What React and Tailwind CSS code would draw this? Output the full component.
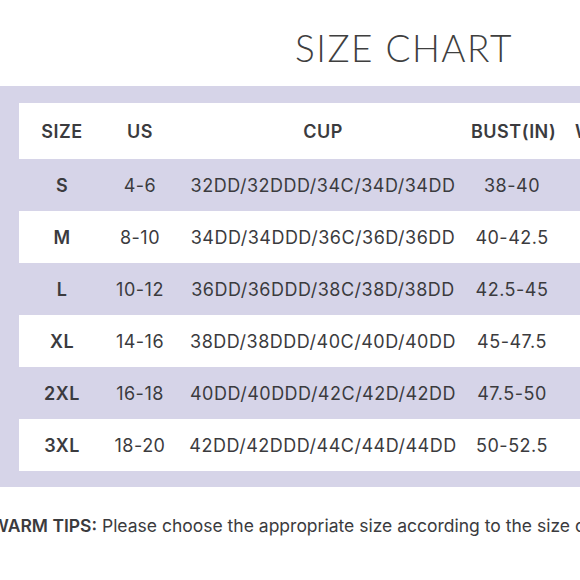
import React from 'react';

const rows = [
  { size: 'S', us: '4-6', cup: '32DD/32DDD/34C/34D/34DD', bust: '38-40' },
  { size: 'M', us: '8-10', cup: '34DD/34DDD/36C/36D/36DD', bust: '40-42.5' },
  { size: 'L', us: '10-12', cup: '36DD/36DDD/38C/38D/38DD', bust: '42.5-45' },
  { size: 'XL', us: '14-16', cup: '38DD/38DDD/40C/40D/40DD', bust: '45-47.5' },
  { size: '2XL', us: '16-18', cup: '40DD/40DDD/42C/42D/42DD', bust: '47.5-50' },
  { size: '3XL', us: '18-20', cup: '42DD/42DDD/44C/44D/44DD', bust: '50-52.5' },
];

const Row = ({ cells, white }) => (
  <div
    className={`grid grid-cols-[86px_70px_296px_82px_140px] items-center w-[674px] h-[52px] ${
      white ? 'bg-white' : ''
    }`}
  >
    {cells.map((c, i) => (
      <div
        key={i}
        className={`text-center whitespace-nowrap ${i === 0 ? 'font-semibold' : 'font-normal'}`}
      >
        {c}
      </div>
    ))}
  </div>
);

const App = () => {
  return (
    <div className="w-[580px] h-[580px] overflow-hidden bg-white text-[#3b3b3e] font-['Inter',sans-serif]">
      <div className="h-[86px] pt-[29px] pl-[295px]">
        <h1 className="font-['Lato',sans-serif] font-light text-[37px] tracking-[0.04em] text-[#3f3f3f] leading-none">
          SIZE CHART
        </h1>
      </div>

      <div className="bg-[#d6d4e8] pt-[17px] pb-[16px] pl-[19px] text-[18px] tracking-[0.5px]">
        <div className="h-[56px] bg-white">
          <div className="grid grid-cols-[86px_70px_296px_82px_140px] items-center w-[674px] h-full font-semibold">
            <div className="text-center">SIZE</div>
            <div className="text-center">US</div>
            <div className="text-center">CUP</div>
            <div className="text-center whitespace-nowrap">BUST(IN)</div>
            <div className="text-center whitespace-nowrap">WAIST(IN)</div>
          </div>
        </div>
        {rows.map((r, i) => (
          <Row key={r.size} white={i % 2 === 1} cells={[r.size, r.us, r.cup, r.bust, '']} />
        ))}
      </div>

      <p className="mt-[26px] ml-[-9px] text-[17.5px] whitespace-nowrap text-[#3b3b3e]">
        <span className="font-semibold">WARM TIPS:</span> Please choose the appropriate size according to the size chart
      </p>
    </div>
  );
};

export default App;
